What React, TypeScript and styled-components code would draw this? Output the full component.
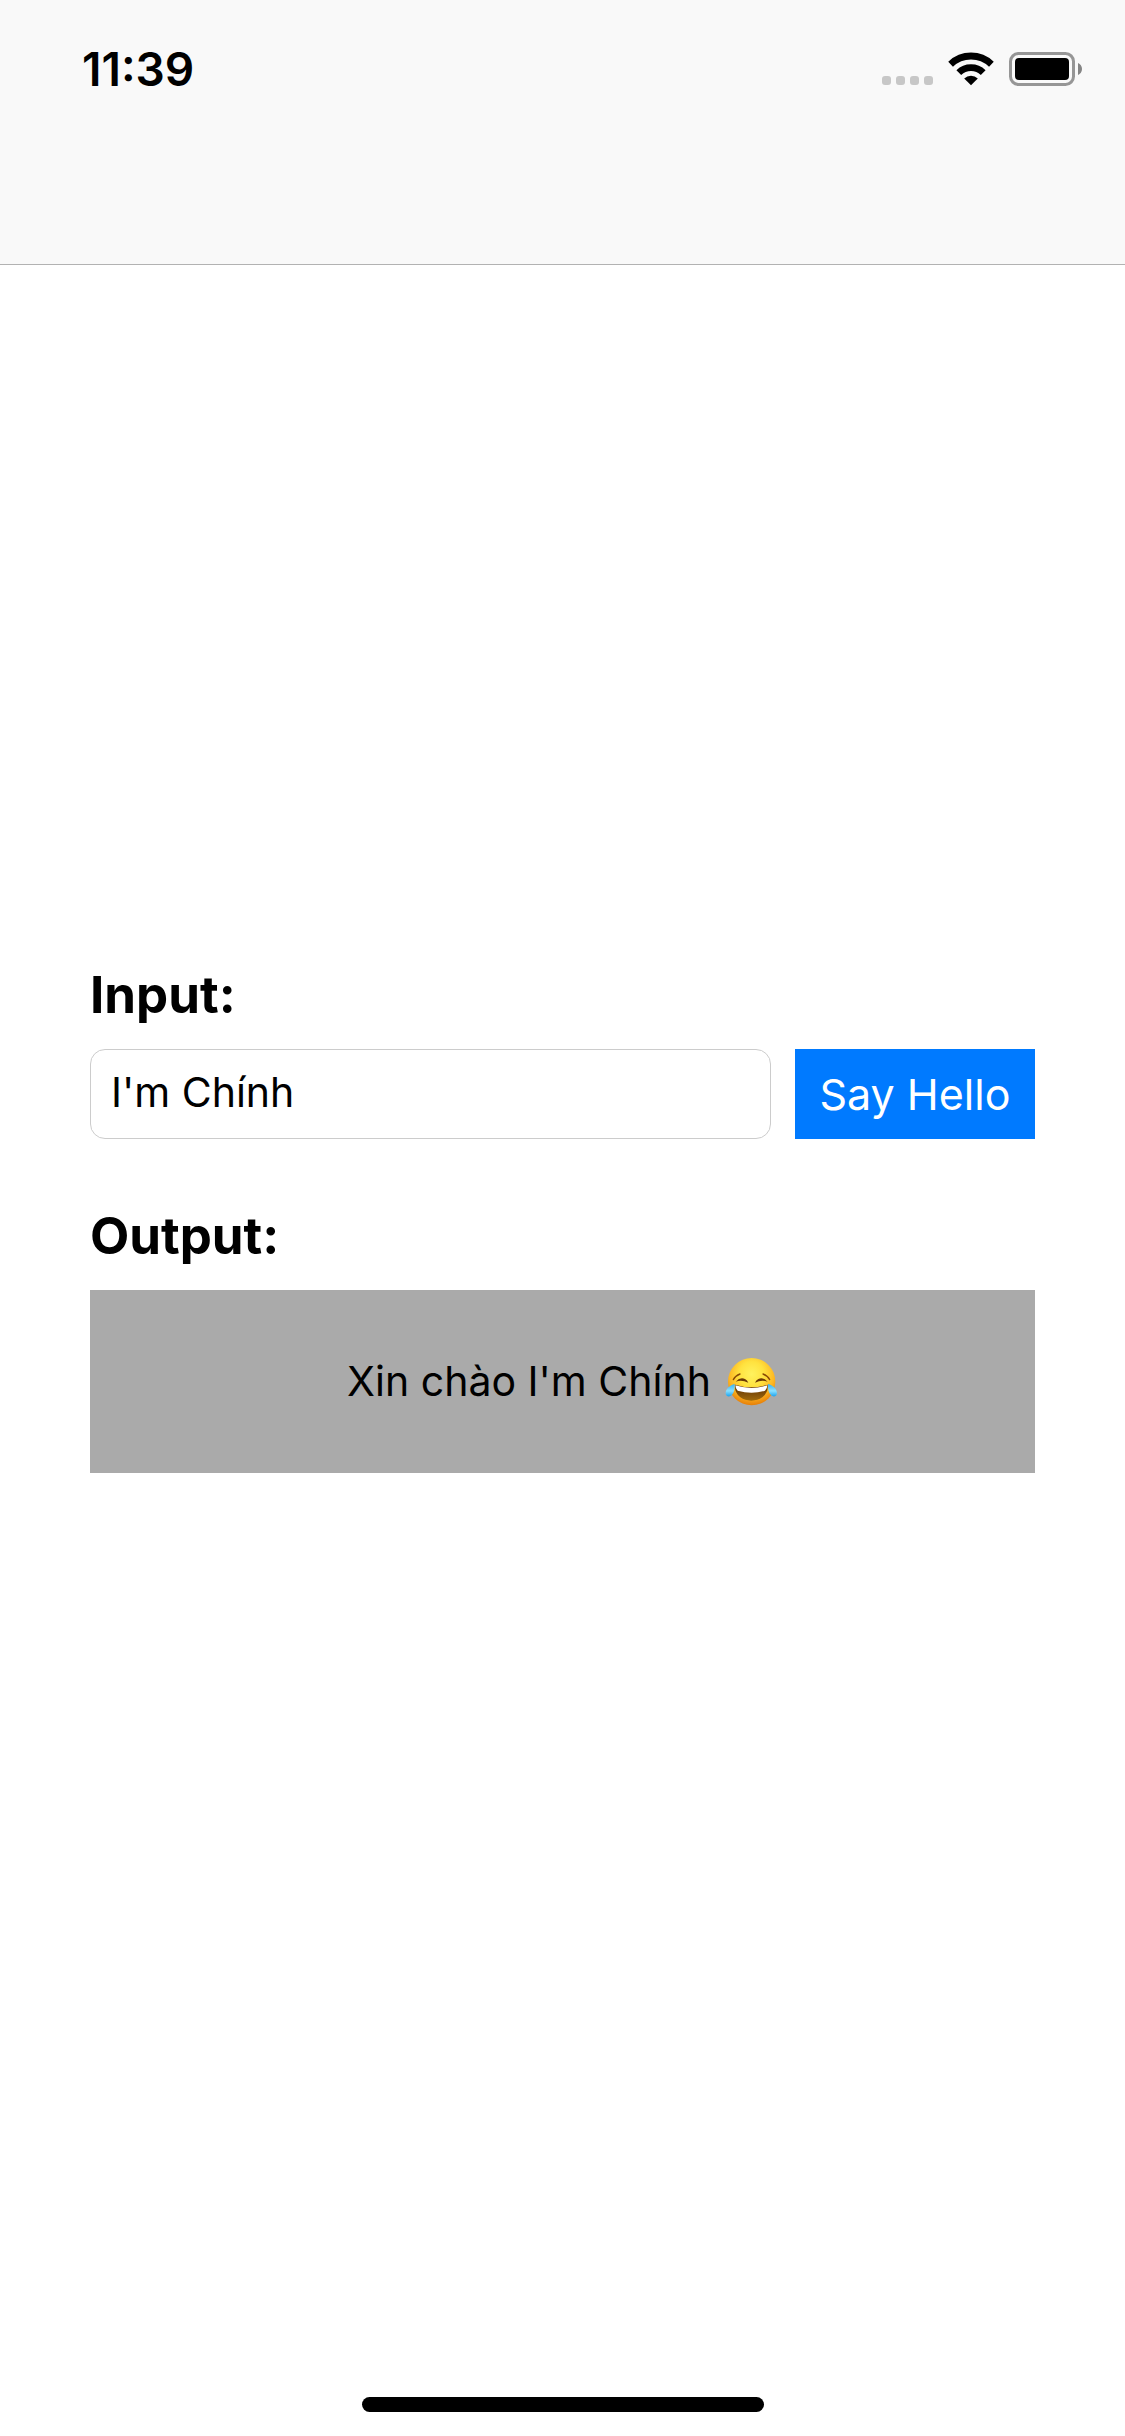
import { useState } from "react";
import styled, { createGlobalStyle } from "styled-components";

const GlobalStyle = createGlobalStyle`
  *, *::before, *::after { box-sizing: border-box; }
  body {
    margin: 0;
    background: #ffffff;
    color: #000000;
    font-family: Inter, "Liberation Sans", sans-serif;
  }
`;

const Screen = styled.div`
  display: flex;
  flex-direction: column;
  min-height: 100vh;
`;

const NavigationBar = styled.header`
  min-height: 265px;
  background: #f9f9f9;
  border-bottom: 1px solid #b2b2b2;
`;

const StatusBar = styled.div`
  display: flex;
  align-items: center;
  justify-content: space-between;
  padding: 42px 42px 0 82px;
`;

const Clock = styled.time`
  font-size: 46px;
  line-height: 54px;
  font-weight: 600;
`;

const Indicators = styled.div`
  display: flex;
  align-items: flex-end;
  gap: 15px;

  svg { display: block; }
`;

const Content = styled.main`
  flex: 1;
  display: flex;
  flex-direction: column;
  justify-content: center;
  gap: 66px;
  padding: 0 90px;
`;

const Field = styled.div`
  display: flex;
  flex-direction: column;
  gap: 24px;
`;

const FieldLabel = styled.label`
  font-size: 51px;
  line-height: 61px;
  font-weight: 700;
`;

const InputRow = styled.div`
  display: flex;
  gap: 24px;
`;

const TextField = styled.input`
  flex: 1;
  min-width: 0;
  height: 90px;
  padding: 0 20px 4px;
  border: 1px solid #cccccc;
  border-radius: 15px;
  background: #ffffff;
  color: #000000;
  font: 400 41px Inter, "Liberation Sans", sans-serif;
  outline: none;
`;

const ActionButton = styled.button`
  flex: none;
  min-width: 240px;
  height: 90px;
  padding: 0;
  border: 0;
  background: #007aff;
  color: #ffffff;
  font: 400 43px Inter, "Liberation Sans", sans-serif;
  white-space: nowrap;
  cursor: pointer;
`;

const OutputBox = styled.output`
  display: flex;
  align-items: center;
  justify-content: center;
  gap: 14px;
  min-height: 183px;
  background: #aaaaaa;
  font-size: 41px;
  line-height: 51px;
`;

const BottomArea = styled.footer`
  display: flex;
  align-items: flex-end;
  justify-content: center;
  min-height: 264px;
  padding-bottom: 24px;
`;

const HomeIndicator = styled.div`
  width: 402px;
  height: 15px;
  border-radius: 8px;
  background: #000000;
`;

function SignalIcon() {
  return (
    <svg width="51" height="10" viewBox="0 0 51 10" aria-hidden="true" fill="#c7c7c7">
      {[0, 14, 28, 42].map((x) => (
        <rect key={x} x={x} width="9" height="9" rx="3" />
      ))}
    </svg>
  );
}

function WifiIcon() {
  return (
    <svg width="46" height="34" viewBox="0 0 46 34" aria-hidden="true">
      <g fill="none" stroke="#000000" strokeWidth="6.8">
        <path d="M2.6 12.2A29.5 29.5 0 0 1 43.4 12.2" />
        <path d="M10.8 20.6A17.4 17.4 0 0 1 35.2 20.6" />
      </g>
      <path d="M16.2 26.5A10 10 0 0 1 29.8 26.5L23 33.2Z" fill="#000000" />
    </svg>
  );
}

function BatteryIcon() {
  return (
    <svg width="74" height="34" viewBox="0 0 74 34" aria-hidden="true">
      <rect x="1.5" y="1.5" width="63" height="31" rx="8" fill="none" stroke="#969696" strokeWidth="3" />
      <rect x="6" y="6" width="54" height="22" rx="4" fill="#000000" />
      <path d="M69 11C71.3 12 73 14 73 17S71.3 22 69 23Z" fill="#858585" />
    </svg>
  );
}

function JoyIcon() {
  return (
    <svg width="53" height="48" viewBox="0 0 159 144" role="img" aria-label="face with tears of joy">
      <defs>
        <radialGradient id="skin" cx="50%" cy="34%" r="66%">
          <stop offset="0" stopColor="#fff25e" />
          <stop offset="0.4" stopColor="#ffe23f" />
          <stop offset="0.72" stopColor="#fdb823" />
          <stop offset="1" stopColor="#e67e08" />
        </radialGradient>
        <linearGradient id="mouth" x1="0" y1="0" x2="0" y2="1">
          <stop offset="0" stopColor="#5a2d05" />
          <stop offset="1" stopColor="#a06a0c" />
        </linearGradient>
        <linearGradient id="tear" x1="0" y1="0" x2="0" y2="1">
          <stop offset="0" stopColor="#35b1f2" />
          <stop offset="0.55" stopColor="#8be0ff" />
          <stop offset="1" stopColor="#1ba4f0" />
        </linearGradient>
      </defs>
      <circle cx="80" cy="71" r="71" fill="url(#skin)" />
      <g fill="none" stroke="#8a4a05" strokeWidth="4" strokeLinecap="round">
        <path d="M25 65Q31 53 45 48" />
        <path d="M114 48Q128 53 134 65" />
      </g>
      <g fill="#6b3a06">
        <path d="M32 71Q46 56 60 63Q67 66 70 74Q50 64 32 71Z" />
        <path d="M90 74Q93 66 100 63Q114 56 128 71Q110 64 90 74Z" />
      </g>
      <path d="M30 80Q80 96 128 80Q130 104 112 118Q98 128 79 128Q60 128 46 118Q28 104 30 80Z" fill="url(#mouth)" />
      <path d="M31 82Q80 98 127 82Q127 92 120 98Q80 110 38 98Q31 92 31 82Z" fill="#ffffff" />
      <g fill="url(#tear)">
        <path d="M29 78C15 82 3 92 2 104C1 114 12 119 20 112C28 104 30 91 29 78Z" />
        <path d="M129 78C143 82 155 92 156 104C157 114 146 119 138 112C130 104 128 91 129 78Z" />
      </g>
    </svg>
  );
}

export default function App() {
  const [name, setName] = useState("I'm Chính");
  const [greeted, setGreeted] = useState("I'm Chính");

  return (
    <>
      <GlobalStyle />
      <Screen>
        <NavigationBar>
          <StatusBar>
            <Clock>11:39</Clock>
            <Indicators>
              <SignalIcon />
              <WifiIcon />
              <BatteryIcon />
            </Indicators>
          </StatusBar>
        </NavigationBar>
        <Content>
          <Field>
            <FieldLabel htmlFor="name">Input:</FieldLabel>
            <InputRow>
              <TextField id="name" type="text" value={name} onChange={(e) => setName(e.target.value)} />
              <ActionButton type="button" onClick={() => setGreeted(name)}>
                Say Hello
              </ActionButton>
            </InputRow>
          </Field>
          <Field>
            <FieldLabel htmlFor="greeting">Output:</FieldLabel>
            <OutputBox id="greeting" htmlFor="name">
              <span>Xin chào {greeted}</span>
              <JoyIcon />
            </OutputBox>
          </Field>
        </Content>
        <BottomArea>
          <HomeIndicator />
        </BottomArea>
      </Screen>
    </>
  );
}
